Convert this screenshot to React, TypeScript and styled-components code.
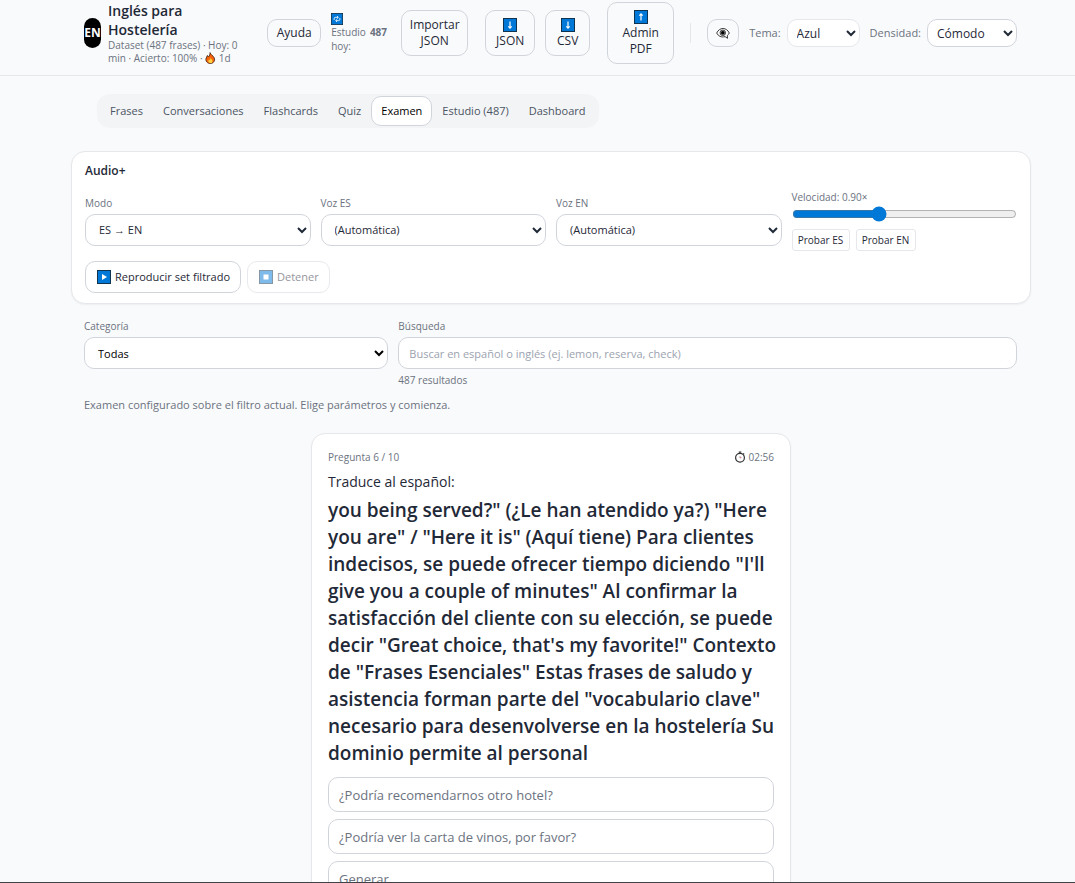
import React, { useState } from "react";
import styled, { createGlobalStyle, css } from "styled-components";

const GlobalStyle = createGlobalStyle`
  *, *::before, *::after { box-sizing: border-box; }
  body {
    margin: 0;
    background: #f9fafb;
    color: #1f2937;
    font-family: "Segoe UI", "Open Sans", "Noto Sans", sans-serif;
    font-size: 11px;
    line-height: 16px;
  }
  button, input, select { font: inherit; color: inherit; margin: 0; }
  button { cursor: pointer; }
  svg { display: block; flex: none; }
`;

const Page = styled.div`
  height: 100vh;
  overflow: hidden;
  border-bottom: 1px solid #3f4247;
`;

const Header = styled.header`
  display: flex;
  align-items: center;
  height: 76px;
  padding: 0 58px 9px 84px;
  border-bottom: 1px solid #e5e7eb;
`;

const Brand = styled.div`
  display: flex;
  align-items: center;
  gap: 7px;
  flex: 1;
  min-width: 0;
`;

const Logo = styled.div`
  display: flex;
  align-items: center;
  justify-content: center;
  flex: none;
  width: 17px;
  height: 30px;
  border-radius: 9px;
  background: #000;
  color: #fff;
  font-size: 12px;
  font-weight: 700;
`;

const BrandTitle = styled.h1`
  margin: 0;
  font-size: 14px;
  font-weight: 600;
  line-height: 19px;
`;

const BrandMeta = styled.p`
  margin: 0;
  color: #6b7280;
  font-size: 10px;
  line-height: 13px;
  white-space: nowrap;

  svg { display: inline-block; vertical-align: -2px; }
`;

const Tools = styled.div`
  display: flex;
  align-items: center;
  gap: 17px;
`;

const Group = styled.div`
  display: flex;
  align-items: center;
  gap: 10px;
`;

const outline = css`
  border: 1px solid #d1d5db;
  border-radius: 10px;
  background: transparent;
`;

const ToolButton = styled.button<{ $width: number }>`
  ${outline}
  display: flex;
  flex-direction: column;
  align-items: center;
  justify-content: center;
  width: ${(p) => p.$width}px;
  padding: 6px 0;
  font-size: 12px;
  line-height: 16px;
  text-align: center;

  svg { margin: 1px 0; }
`;

const SmallTool = styled(ToolButton)`
  height: 28px;
  padding: 0;
`;

const StudyToday = styled.div`
  width: 60px;
  color: #6b7280;
  font-size: 10px;
  line-height: 14px;
`;

const StudyLine = styled.div`
  display: flex;
  gap: 4px;
`;

const Divider = styled.div`
  width: 1px;
  height: 20px;
  margin: 0 -1px;
  background: #e5e7eb;
`;

const HeaderLabel = styled.label`
  display: flex;
  align-items: center;
  gap: 6px;
  color: #6b7280;
  white-space: nowrap;
`;

const HeaderSelect = styled.select<{ $width: number; $soft?: boolean }>`
  ${outline}
  width: ${(p) => p.$width}px;
  height: 28px;
  padding: 0 0 0 5px;
  border-color: ${(p) => (p.$soft ? "#e5e7eb" : "#d1d5db")};
  background: #fff;
  color: #1f2937;
  font-size: 12px;
`;

const Main = styled.main`
  padding: 18px 44px 0 71px;
`;

const Tabs = styled.nav`
  display: flex;
  width: fit-content;
  margin-left: 26px;
  padding: 2px 3px;
  border-radius: 13px;
  background: #f3f4f6;
`;

const Tab = styled.button<{ $active: boolean }>`
  height: 30px;
  padding: 0 9px;
  border: 1px solid ${(p) => (p.$active ? "#d1d5db" : "transparent")};
  border-radius: 10px;
  background: ${(p) => (p.$active ? "#fff" : "transparent")};
  color: ${(p) => (p.$active ? "#000" : "#4b5563")};
`;

const Card = styled.section`
  border: 1px solid #e5e7eb;
  border-radius: 14px;
  background: #fff;
  box-shadow: 0 1px 2px rgba(0, 0, 0, 0.05);
`;

const AudioCard = styled(Card)`
  margin-top: 23px;
  padding: 11px 13px 10px;
`;

const CardTitle = styled.h2`
  margin: 0 0 11px;
  font-size: 12px;
  font-weight: 600;
  line-height: 16px;
`;

const AudioGrid = styled.div`
  display: grid;
  grid-template-columns: repeat(4, 1fr);
  gap: 10px;
  align-items: center;
`;

const Field = styled.div`
  display: flex;
  flex-direction: column;
  min-width: 0;
`;

const FieldLabel = styled.label<{ $tight?: boolean }>`
  margin-bottom: ${(p) => (p.$tight ? 2 : 4)}px;
  color: #6b7280;
  font-size: 10px;
  line-height: 14px;
`;

const Select = styled.select<{ $strong?: boolean }>`
  ${outline}
  width: 100%;
  height: 32px;
  padding: 0 0 0 9px;
  background: #fff;
  color: ${(p) => (p.$strong ? "#000" : "#1f2937")};
`;

const Slider = styled.input`
  width: 100%;
  height: 16px;
  accent-color: #0078d7;
`;

const TestRow = styled.div`
  display: flex;
  gap: 6px;
  margin-top: 7px;
`;

const TestButton = styled.button<{ $width: number }>`
  width: ${(p) => p.$width}px;
  height: 22px;
  padding: 0;
  border: 1px solid #e5e7eb;
  border-radius: 3px;
  background: #fff;
  font-size: 10px;
  line-height: 14px;
`;

const PlayRow = styled.div`
  display: flex;
  gap: 6px;
  margin-top: 10px;
`;

const PlayButton = styled.button`
  ${outline}
  display: flex;
  align-items: center;
  gap: 4px;
  height: 32px;
  padding: 0 10px 0 11px;
  background: #fff;

  &:disabled { opacity: 0.5; cursor: default; }
`;

const Filters = styled.section`
  display: grid;
  grid-template-columns: repeat(3, 1fr);
  gap: 10px;
  margin: 15px 14px 0 13px;
`;

const SearchField = styled(Field)`
  grid-column: span 2;
`;

const SearchInput = styled.input`
  ${outline}
  width: 100%;
  height: 32px;
  padding: 0 10px;
  background: #fff;

  &::placeholder { color: #9ca3af; opacity: 1; }
`;

const ResultCount = styled.p`
  margin: 4px 0 0;
  color: #6b7280;
  font-size: 10px;
  line-height: 14px;
`;

const Note = styled.p`
  margin: 10px 13px 0;
  color: #6b7280;
`;

const ExamCard = styled(Card)`
  max-width: 480px;
  margin: 20px auto 0;
  padding: 16px;
`;

const ExamTop = styled.div`
  display: flex;
  justify-content: space-between;
  color: #6b7280;
  font-size: 10px;
  line-height: 14px;
`;

const Timer = styled.span`
  display: flex;
  align-items: center;
  gap: 3px;
`;

const Prompt = styled.p`
  margin: 8px 0 5px;
  font-size: 14px;
  line-height: 20px;
`;

const Question = styled.h3`
  margin: 0;
  font-size: 19px;
  font-weight: 600;
  line-height: 27px;
  white-space: pre;
`;

const Options = styled.div`
  display: flex;
  flex-direction: column;
  gap: 7px;
  margin-top: 10px;
`;

const Option = styled.button`
  ${outline}
  height: 35px;
  padding: 0 10px;
  background: #fff;
  color: #6b7280;
  font-size: 13px;
  text-align: left;
`;

type TileKind = "down" | "up" | "play" | "stop" | "repeat";

const Tile = ({ kind, size = 14 }: { kind: TileKind; size?: number }) => (
  <svg width={size} height={size} viewBox="0 0 14 14" aria-hidden="true">
    <rect x="0.5" y="0.5" width="13" height="13" fill="#0078d7" stroke="#10334f" />
    {kind === "down" && <path d="M7 3.5v6.5M5.3 8.4L7 10.1l1.7-1.7" fill="none" stroke="#fff" strokeWidth="1.2" />}
    {kind === "up" && <path d="M7 10.5V4M5.3 5.6L7 3.9l1.7 1.7" fill="none" stroke="#fff" strokeWidth="1.2" />}
    {kind === "play" && <path d="M5 4l5 3-5 3z" fill="#fff" />}
    {kind === "stop" && <rect x="4.5" y="4.5" width="5" height="5" fill="#fff" />}
    {kind === "repeat" && (
      <path
        d="M3.700 8.200V6.400c0-.8.500-1.300 1.300-1.300h3M7 3.600l1.600 1.500L7 6.600M10.300 5.800v1.800c0 .8-.5 1.300-1.300 1.300H6M7 7.400L5.400 8.900 7 10.400"
        fill="none"
        stroke="#fff"
        strokeWidth="1"
      />
    )}
  </svg>
);

const Flame = () => (
  <svg width="11" height="12" viewBox="0 0 11 12" aria-hidden="true">
    <path
      d="M5 .6C5.400 2.500 8 3.400 9.200 5.800c1.200 2.900-.7 5.700-3.800 5.700S.2 9 1.100 6.200C1.400 5 2.100 4.500 2.300 3.500c.6.400.9.900 1 1.500C4.600 3.800 5.200 2.300 5 .6z"
      fill="#f7630c"
      stroke="#3b1d0c"
      strokeWidth="0.8"
    />
    <path d="M5.600 5.500c.3 1.300 1.900 2 1.900 3.700 0 1.200-.9 1.900-2.100 1.900s-2.200-.8-2.100-2c.1-.8.600-1.200.8-1.800.4.200.6.500.7.900.6-.7.900-1.600.8-2.700z" fill="#ffd23e" />
  </svg>
);

const EyeBubble = () => (
  <svg width="14" height="12" viewBox="0 0 14 12" aria-hidden="true">
    <path d="M.7 6C2.200 3 4.400 1.500 7 1.500S11.800 3 13.300 6c-.5 1.100-1.200 1.900-2 2.500l.2 2.800-2.400-1.700C5.300 10.700 2.300 9.100.7 6z" fill="#fff" stroke="#222" strokeWidth="0.9" />
    <circle cx="6.800" cy="5.800" r="2.800" fill="#999" stroke="#222" strokeWidth="0.7" />
    <circle cx="6.800" cy="5.800" r="1.800" fill="#000" />
  </svg>
);

const Stopwatch = () => (
  <svg width="12" height="12" viewBox="0 0 12 12" aria-hidden="true">
    <circle cx="6" cy="6.800" r="4.400" fill="#fff" stroke="#333" strokeWidth="1.200" />
    <path d="M4.700 1h2.600M6 1v1.400M9.200 2.400l1 1" stroke="#333" strokeWidth="1.200" />
    <path d="M6 7V5.200" stroke="#777" strokeWidth="0.700" />
    <path d="M5.900 7L7.400 6.500" stroke="#e04b5a" strokeWidth="0.800" />
  </svg>
);

const TABS = ["Frases", "Conversaciones", "Flashcards", "Quiz", "Examen", "Estudio (487)", "Dashboard"];

const QUESTION = `you being served?" (¿Le han atendido ya?) "Here
you are" / "Here it is" (Aquí tiene) Para clientes
indecisos, se puede ofrecer tiempo diciendo "I'll
give you a couple of minutes" Al confirmar la
satisfacción del cliente con su elección, se puede
decir "Great choice, that's my favorite!" Contexto
de "Frases Esenciales" Estas frases de saludo y
asistencia forman parte del "vocabulario clave"
necesario para desenvolverse en la hostelería Su
dominio permite al personal`;

const OPTIONS = ["¿Podría recomendarnos otro hotel?", "¿Podría ver la carta de vinos, por favor?", "Generar"];

export default function App() {
  const [tab, setTab] = useState("Examen");
  const [speed, setSpeed] = useState(0.9);

  return (
    <>
      <GlobalStyle />
      <Page>
        <Header>
          <Brand>
            <Logo>EN</Logo>
            <div>
              <BrandTitle>
                Inglés para
                <br />
                Hostelería
              </BrandTitle>
              <BrandMeta>
                Dataset (487 frases) · Hoy: 0
                <br />
                min · Acierto: 100% · <Flame /> 1d
              </BrandMeta>
            </div>
          </Brand>
          <Tools>
            <Group>
              <SmallTool $width={54}>Ayuda</SmallTool>
              <StudyToday>
                <Tile kind="repeat" size={12} />
                <StudyLine>
                  <span>Estudio</span>
                  <b>487</b>
                </StudyLine>
                hoy:
              </StudyToday>
              <ToolButton $width={67}>
                Importar
                <br />
                JSON
              </ToolButton>
            </Group>
            <Group>
              <ToolButton $width={50}>
                <Tile kind="down" />
                JSON
              </ToolButton>
              <ToolButton $width={45}>
                <Tile kind="down" />
                CSV
              </ToolButton>
            </Group>
            <ToolButton $width={67}>
              <Tile kind="up" />
              <span>Admin</span>
              <span>PDF</span>
            </ToolButton>
            <Divider />
            <Group>
              <SmallTool $width={32} aria-label="Mostrar u ocultar">
                <EyeBubble />
              </SmallTool>
              <HeaderLabel>
                Tema:
                <HeaderSelect $width={73} $soft>
                  <option>Azul</option>
                </HeaderSelect>
              </HeaderLabel>
              <HeaderLabel>
                Densidad:
                <HeaderSelect $width={90}>
                  <option>Cómodo</option>
                </HeaderSelect>
              </HeaderLabel>
            </Group>
          </Tools>
        </Header>

        <Main>
          <Tabs>
            {TABS.map((name) => (
              <Tab key={name} $active={name === tab} onClick={() => setTab(name)}>
                {name}
              </Tab>
            ))}
          </Tabs>

          <AudioCard>
            <CardTitle>Audio+</CardTitle>
            <AudioGrid>
              <Field>
                <FieldLabel htmlFor="modo">Modo</FieldLabel>
                <Select id="modo">
                  <option>ES → EN</option>
                </Select>
              </Field>
              <Field>
                <FieldLabel htmlFor="voz-es">Voz ES</FieldLabel>
                <Select id="voz-es">
                  <option>(Automática)</option>
                </Select>
              </Field>
              <Field>
                <FieldLabel htmlFor="voz-en">Voz EN</FieldLabel>
                <Select id="voz-en">
                  <option>(Automática)</option>
                </Select>
              </Field>
              <Field>
                <FieldLabel htmlFor="velocidad" $tight>
                  Velocidad: {speed.toFixed(2)}×
                </FieldLabel>
                <Slider
                  id="velocidad"
                  type="range"
                  min={0.5}
                  max={1.55}
                  step={0.05}
                  value={speed}
                  onChange={(e) => setSpeed(Number(e.target.value))}
                />
                <TestRow>
                  <TestButton $width={58}>Probar ES</TestButton>
                  <TestButton $width={60}>Probar EN</TestButton>
                </TestRow>
              </Field>
            </AudioGrid>
            <PlayRow>
              <PlayButton>
                <Tile kind="play" />
                Reproducir set filtrado
              </PlayButton>
              <PlayButton disabled>
                <Tile kind="stop" />
                Detener
              </PlayButton>
            </PlayRow>
          </AudioCard>

          <Filters>
            <Field>
              <FieldLabel htmlFor="categoria">Categoría</FieldLabel>
              <Select id="categoria" $strong>
                <option>Todas</option>
              </Select>
            </Field>
            <SearchField>
              <FieldLabel htmlFor="busqueda">Búsqueda</FieldLabel>
              <SearchInput id="busqueda" placeholder="Buscar en español o inglés (ej. lemon, reserva, check)" />
              <ResultCount>487 resultados</ResultCount>
            </SearchField>
          </Filters>
          <Note>Examen configurado sobre el filtro actual. Elige parámetros y comienza.</Note>

          <ExamCard>
            <ExamTop>
              <span>Pregunta 6 / 10</span>
              <Timer>
                <Stopwatch />
                02:56
              </Timer>
            </ExamTop>
            <Prompt>Traduce al español:</Prompt>
            <Question>{QUESTION}</Question>
            <Options>
              {OPTIONS.map((text) => (
                <Option key={text}>{text}</Option>
              ))}
            </Options>
          </ExamCard>
        </Main>
      </Page>
    </>
  );
}
